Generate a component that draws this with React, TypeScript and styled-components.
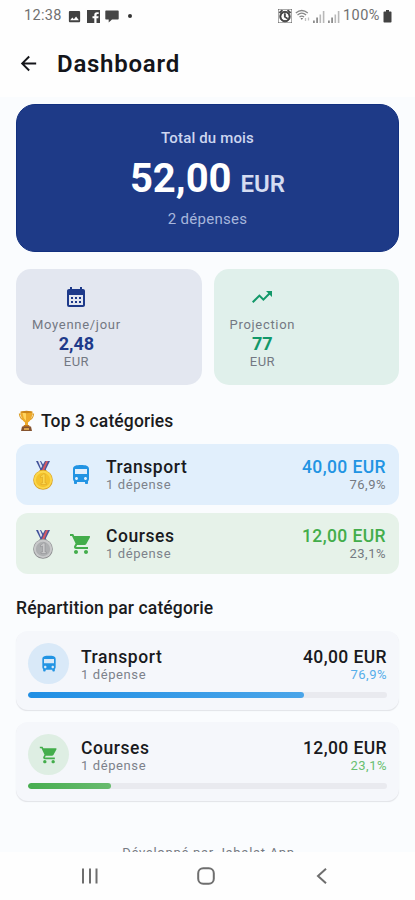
import React from "react";
import styled, { createGlobalStyle } from "styled-components";
import {
  MdAlarm,
  MdArrowBack,
  MdCalendarMonth,
  MdDirectionsBus,
  MdImage,
  MdShoppingCart,
  MdTrendingUp,
} from "react-icons/md";

const GlobalStyle = createGlobalStyle`
  * { box-sizing: border-box; }
  body { margin: 0; background: #fff; font-family: Roboto, "Liberation Sans", sans-serif; }
  svg { display: block; flex: none; }
`;

const Screen = styled.div`
  width: 415px;
  height: 900px;
  display: flex;
  flex-direction: column;
  overflow: hidden;
  background: #fefefe;
`;

const StatusBar = styled.header`
  height: 32px;
  padding: 0 23px 0 24px;
  display: flex;
  align-items: center;
  justify-content: space-between;
  color: #414141;
`;

const StatusGroup = styled.div<{ $gap: number }>`
  display: flex;
  align-items: center;
  gap: ${(p) => p.$gap}px;
`;

const StatusText = styled.span<{ $spacing: number }>`
  font-size: 14.5px;
  line-height: 16px;
  letter-spacing: ${(p) => p.$spacing}px;
  color: #707070;
`;

const Dot = styled.span`
  width: 4px;
  height: 4px;
  margin-left: 4px;
  border-radius: 50%;
  background: #333;
`;

const AppBar = styled.div`
  height: 65px;
  flex: none;
  padding: 0 17px 2px;
  display: flex;
  align-items: center;
  gap: 17px;
  color: #14151a;
`;

const Title = styled.h1`
  margin: 0;
  font-size: 24px;
  font-weight: 600;
  line-height: 30px;
  letter-spacing: 0.75px;
`;

const Content = styled.main`
  height: 755px;
  flex: none;
  overflow: hidden;
  padding: 7px 16px 0;
  background: #fafcfe;
  display: flex;
  flex-direction: column;
`;

const Hero = styled.section`
  height: 148px;
  flex: none;
  padding-top: 23px;
  border-radius: 19px;
  background: #1e3a87;
  border: 1px solid #12307f;
  display: flex;
  flex-direction: column;
  align-items: center;
  color: #fff;
`;

const HeroLabel = styled.div`
  font-size: 15px;
  font-weight: 500;
  line-height: 20px;
  letter-spacing: 0.15px;
  color: #cdd6f0;
`;

const HeroAmount = styled.div`
  margin-top: 7px;
  font-size: 40px;
  font-weight: 700;
  line-height: 48px;
  display: flex;
  align-items: baseline;
  gap: 9px;
`;

const HeroCurrency = styled.span`
  font-size: 24px;
  font-weight: 600;
  color: #d5dcf1;
`;

const HeroCount = styled.div`
  margin-top: 1px;
  font-size: 15px;
  line-height: 20px;
  letter-spacing: 0.3px;
  color: #a7b6dc;
`;

const Stats = styled.section`
  margin-top: 17px;
  display: grid;
  grid-template-columns: 1fr 1fr;
  gap: 12px;
`;

const StatCard = styled.div<{ $bg: string }>`
  height: 116px;
  padding: 16px 16px 0;
  border-radius: 15px;
  background: ${(p) => p.$bg};
  display: flex;
  align-items: flex-start;
`;

const StatBody = styled.div<{ $color: string }>`
  display: flex;
  flex-direction: column;
  align-items: center;
  color: ${(p) => p.$color};
`;

const StatLabel = styled.div`
  margin-top: 7px;
  font-size: 13px;
  line-height: 18px;
  letter-spacing: 0.7px;
  color: #737883;
`;

const StatValue = styled.div`
  font-size: 18px;
  font-weight: 700;
  line-height: 19px;
`;

const StatUnit = styled.div`
  font-size: 13px;
  line-height: 18px;
  letter-spacing: 0.4px;
  color: #737883;
`;

const SectionTitle = styled.h2<{ $top: number }>`
  margin: ${(p) => p.$top}px 0 0;
  font-size: 17.5px;
  font-weight: 500;
  line-height: 24px;
  letter-spacing: 0.12px;
  color: #1a1b20;
  display: flex;
  align-items: center;
  gap: 4px;
`;

const RankRow = styled.div<{ $bg: string; $top: number }>`
  height: 61px;
  flex: none;
  margin-top: ${(p) => p.$top}px;
  padding: 0 13px 0 14px;
  border-radius: 12px;
  background: ${(p) => p.$bg};
  display: flex;
  align-items: center;
`;

const RankIcon = styled.div<{ $color: string }>`
  width: 24px;
  margin: 0 13px;
  color: ${(p) => p.$color};
`;

const Label = styled.div`
  flex: 1;
  padding-top: 1px;
  display: flex;
  flex-direction: column;
`;

const Name = styled.div`
  font-size: 17.5px;
  font-weight: 500;
  line-height: 19px;
  letter-spacing: 0.55px;
  color: #191a20;
`;

const Count = styled.div`
  font-size: 13px;
  line-height: 16px;
  letter-spacing: 0.6px;
  color: #7d828b;
`;

const Figures = styled.div`
  padding-top: 1px;
  display: flex;
  flex-direction: column;
  align-items: flex-end;
`;

const Amount = styled.div<{ $color: string }>`
  font-size: 17.5px;
  font-weight: 500;
  line-height: 19px;
  letter-spacing: 0.4px;
  color: ${(p) => p.$color};
`;

const Percent = styled.div<{ $color: string }>`
  font-size: 13px;
  line-height: 16px;
  letter-spacing: 0.5px;
  color: ${(p) => p.$color};
`;

const ShareCard = styled.div<{ $top: number }>`
  height: 79px;
  flex: none;
  margin-top: ${(p) => p.$top}px;
  padding: 12px 12px 0;
  border-radius: 12px;
  background: #f5f7fb;
  box-shadow: 0 1px 1px -0.5px #e2e4e8;
`;

const ShareHead = styled.div`
  display: flex;
  align-items: center;
  height: 41px;

  ${Label}, ${Figures} {
    padding-top: 3px;
  }
`;

const Badge = styled.div<{ $bg: string; $color: string }>`
  width: 41px;
  height: 41px;
  margin-right: 12px;
  border-radius: 50%;
  background: ${(p) => p.$bg};
  color: ${(p) => p.$color};
  display: flex;
  align-items: center;
  justify-content: center;
`;

const Track = styled.div`
  margin-top: 8px;
  height: 6px;
  border-radius: 3px;
  overflow: hidden;
  background: #e9eaef;
`;

const Fill = styled.div<{ $from: string; $to: string }>`
  height: 100%;
  border-radius: 3px;
  background: linear-gradient(90deg, ${(p) => p.$from}, ${(p) => p.$to});
`;

const Credit = styled.footer`
  margin-top: 43px;
  flex: none;
  font-size: 13px;
  line-height: 18px;
  letter-spacing: 0.7px;
  text-align: center;
  padding-left: 2px;
  color: #777b83;
`;

const NavBar = styled.nav`
  flex: 1;
  padding: 0 87px 1px 81px;
  background: #fefefe;
  display: grid;
  grid-template-columns: 18px 18px 16px;
  align-items: center;
  justify-content: start;
  column-gap: 98px;
  color: #6e6e6e;
`;

function Medal({ light, mid, dark }: { light: string; mid: string; dark: string }) {
  return (
    <svg width="26" height="32" viewBox="0 0 26 32">
      <path d="M6 2h5l5 9-4 3z" fill="#3f519a" />
      <path d="M8 2h2l4 9-2 1z" fill="#dfe2ef" />
      <path d="M20 2h-5l-5 9 4 3z" fill="#46569b" />
      <path d="M18 2h-2l-4 9 2 1z" fill="#d75b62" />
      <path d="M9.5 11h7v3h-7z" fill={dark} />
      <circle cx="13" cy="21" r="9.8" fill={dark} />
      <circle cx="13" cy="20.8" r="9.2" fill={light} />
      <circle cx="13" cy="21" r="7.2" fill={mid} />
      <path d="M10.500 17q2-1 3-2h1.500v9h1.500v1.500h-5.500V24h1.500v-6l-2 .8z" fill={light} stroke={dark} strokeWidth="0.5" />
    </svg>
  );
}

function Trophy() {
  return (
    <svg width="21" height="22" viewBox="0 0 21 22">
      <path d="M6 4H3.500q.3 5 4.500 6M15 4h2.500q-.3 5-4.500 6" fill="none" stroke="#dca02b" strokeWidth="1.200" />
      <path d="M4.500 1.500h12q0 8-4.500 11v3H9v-3q-4.500-3-4.500-11z" fill="#edaa2b" />
      <path d="M6.500 3H10v8Q7 8 6.500 3z" fill="#ffd45d" />
      <ellipse cx="10.500" cy="2" rx="6" ry="1.200" fill="#c98419" />
      <path d="M8 15h5l1 2H7z" fill="#c47a1e" />
      <path d="M6 16.500h9l1 4.500H5z" fill="#85532f" />
      <path d="M8 18h5v2H8z" fill="#d9a14a" />
    </svg>
  );
}

function FacebookGlyph() {
  return (
    <svg width="13" height="13" viewBox="0 0 13 13">
      <path d="M0 0h13v13H9.500V8.300h1.800l.3-2H9.500V5q0-1 1-1h1.200V2.200H9.900Q7.300 2.200 7.300 4.700v1.600H5.500v2h1.800V13H0z" fill="#424242" />
    </svg>
  );
}

function ChatGlyph() {
  return (
    <svg width="14" height="13" viewBox="0 0 14 13">
      <path d="M1 .5h12q.7 0 .7.700v7.600q0 .7-.7.700H7L3.700 12.600V9.500H1q-.7 0-.7-.7V1.200Q.3.500 1 .500z" fill="#454545" />
    </svg>
  );
}

function WifiGlyph() {
  return (
    <svg width="15" height="14" viewBox="0 0 15 14" fill="none" stroke="#888" strokeWidth="1.300">
      <path d="M.8 4q6-5 12 0M2.500 6q4.300-3.600 8.600 0M4.500 8q2.300-1.900 4.600 0" />
      <path d="M5.500 9h2.600l-1.300 2z" fill="#777" stroke="none" />
      <path d="M10.500 9v3M13.500 8.500v3" stroke="#c1c1c1" />
    </svg>
  );
}

function SignalGlyph() {
  return (
    <svg width="12" height="13" viewBox="0 0 12 13">
      <path d="M0 10.500h1.800V13H0zM3.200 7.500H5V13H3.200z" fill="#8d8d8d" />
      <path d="M6.500 4.500h1.600V13H6.500zM9.800 1h1.600v12H9.800z" fill="#b9b9b9" />
    </svg>
  );
}

function BatteryGlyph() {
  return (
    <svg width="9" height="13" viewBox="0 0 9 13">
      <path d="M3 0h3v1.500h1.700q.8 0 .8.800v9.500q0 .8-.8.800H1.300q-.8 0-.8-.8V2.300q0-.8.800-.8H3z" fill="#424242" />
    </svg>
  );
}

const BLUE = "#2294e3";
const GREEN = "#43ad4b";

const categories = [
  {
    name: "Transport",
    count: "1 dépense",
    amount: "40,00 EUR",
    percent: "76,9%",
    share: 76.9,
    color: BLUE,
    tint: "#e1effc",
    badge: "#d9e9f8",
    percentColor: "#55aeea",
    gradient: ["#208fe4", "#4aa5e9"],
    medal: { light: "#fbd74b", mid: "#f4c22c", dark: "#d79d22" },
    Icon: MdDirectionsBus,
  },
  {
    name: "Courses",
    count: "1 dépense",
    amount: "12,00 EUR",
    percent: "23,1%",
    share: 23.1,
    color: GREEN,
    tint: "#e6f2e9",
    badge: "#deeee3",
    percentColor: "#68bf70",
    gradient: ["#47ae50", "#68bb6e"],
    medal: { light: "#c8c9ca", mid: "#adafb1", dark: "#88898c" },
    Icon: MdShoppingCart,
  },
];

export default function App() {
  return (
    <Screen>
      <GlobalStyle />
      <StatusBar>
        <StatusGroup $gap={5}>
          <StatusText $spacing={0.3}>12:38</StatusText>
          <MdImage size={15} />
          <FacebookGlyph />
          <ChatGlyph />
          <Dot />
        </StatusGroup>
        <StatusGroup $gap={3}>
          <MdAlarm size={14} strokeWidth={1.5} stroke="currentColor" />
          <WifiGlyph />
          <SignalGlyph />
          <SignalGlyph />
          <StatusText $spacing={0.5}>100%</StatusText>
          <BatteryGlyph />
        </StatusGroup>
      </StatusBar>

      <AppBar>
        <MdArrowBack size={23} />
        <Title>Dashboard</Title>
      </AppBar>

      <Content>
        <Hero>
          <HeroLabel>Total du mois</HeroLabel>
          <HeroAmount>
            52,00 <HeroCurrency>EUR</HeroCurrency>
          </HeroAmount>
          <HeroCount>2 dépenses</HeroCount>
        </Hero>

        <Stats>
          <StatCard $bg="#e3e7f0">
            <StatBody $color="#1e3a8a">
              <MdCalendarMonth size={24} />
              <StatLabel>Moyenne/jour</StatLabel>
              <StatValue>2,48</StatValue>
              <StatUnit>EUR</StatUnit>
            </StatBody>
          </StatCard>
          <StatCard $bg="#e0f0eb">
            <StatBody $color="#129869">
              <MdTrendingUp size={24} />
              <StatLabel>Projection</StatLabel>
              <StatValue>77</StatValue>
              <StatUnit>EUR</StatUnit>
            </StatBody>
          </StatCard>
        </Stats>

        <SectionTitle $top={24}>
          <Trophy />
          Top 3 catégories
        </SectionTitle>
        {categories.map(({ Icon, ...c }, i) => (
          <RankRow key={c.name} $bg={c.tint} $top={i === 0 ? 11 : 8}>
            <Medal {...c.medal} />
            <RankIcon $color={c.color}>
              <Icon size={24} />
            </RankIcon>
            <Label>
              <Name>{c.name}</Name>
              <Count>{c.count}</Count>
            </Label>
            <Figures>
              <Amount $color={c.color}>{c.amount}</Amount>
              <Percent $color="#747981">{c.percent}</Percent>
            </Figures>
          </RankRow>
        ))}

        <SectionTitle $top={22}>Répartition par catégorie</SectionTitle>
        {categories.map(({ Icon, ...c }, i) => (
          <ShareCard key={c.name} $top={i === 0 ? 11 : 12}>
            <ShareHead>
              <Badge $bg={c.badge} $color={c.color}>
                <Icon size={20} />
              </Badge>
              <Label>
                <Name>{c.name}</Name>
                <Count>{c.count}</Count>
              </Label>
              <Figures>
                <Amount $color="#191a20">{c.amount}</Amount>
                <Percent $color={c.percentColor}>{c.percent}</Percent>
              </Figures>
            </ShareHead>
            <Track>
              <Fill $from={c.gradient[0]} $to={c.gradient[1]} style={{ width: `${c.share}%` }} />
            </Track>
          </ShareCard>
        ))}
        <Credit>Développé par Jabalat App</Credit>
      </Content>

      <NavBar>
        <svg width="18" height="18" viewBox="0 0 18 18" fill="none" stroke="currentColor" strokeWidth="2">
          <path d="M2 1.500v15M9 1.500v15M15.500 1.500v15" />
        </svg>
        <svg width="18" height="18" viewBox="0 0 18 18" fill="none" stroke="currentColor" strokeWidth="2">
          <rect x="1.200" y="1.200" width="15.600" height="15.600" rx="5" />
        </svg>
        <svg width="16" height="18" viewBox="0 0 16 18" fill="none" stroke="currentColor" strokeWidth="2">
          <path d="M13 1.800 5 9l8 7.200" />
        </svg>
      </NavBar>
    </Screen>
  );
}
